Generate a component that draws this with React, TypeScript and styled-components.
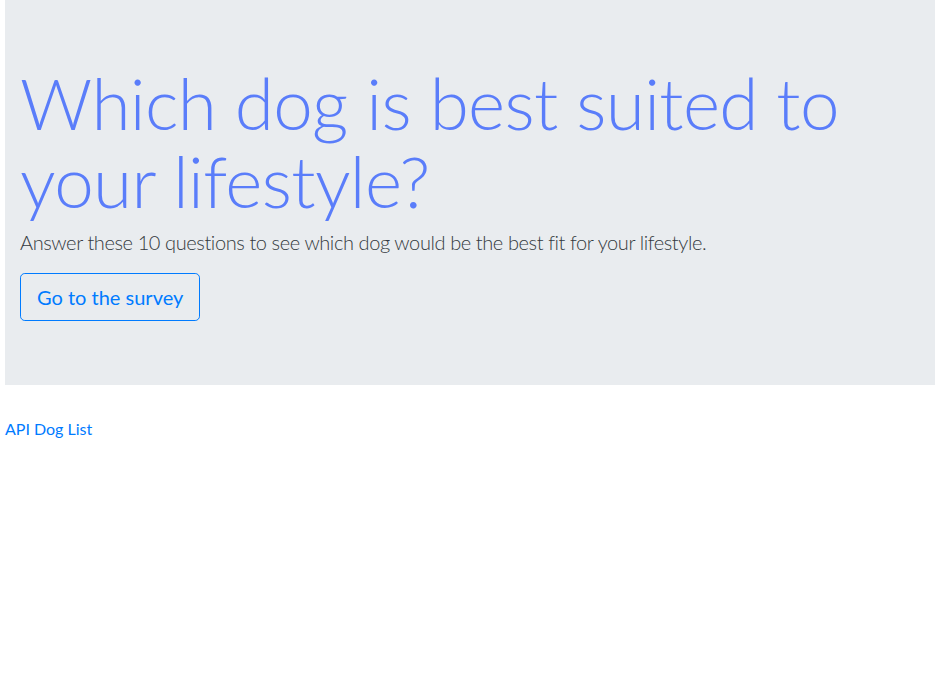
import React from 'react';
import styled, { createGlobalStyle } from 'styled-components';

const GlobalStyle = createGlobalStyle`
  html, body {
    margin: 0;
    padding: 0;
    background: #fff;
  }
  body {
    font-family: Lato, "Open Sans", "Liberation Sans", sans-serif;
    font-size: 16px;
    line-height: 1.5;
    color: #212529;
  }
`;

const Page = styled.div`
  padding: 0 4px 0 5px;
`;

const Jumbotron = styled.section`
  background-color: #e9ecef;
  padding: 64px 15px;
  margin-bottom: 32px;
`;

const Heading = styled.h1`
  margin: 0 0 7px;
  font-size: 71px;
  font-weight: 300;
  line-height: 78px;
  letter-spacing: -0.65px;
  color: #5a7dfa;
`;

const Lead = styled.p`
  margin: 0 0 16px;
  font-size: 20px;
  font-weight: 300;
  line-height: 30px;
  letter-spacing: -0.4px;
  color: #343a40;
`;

const OutlineButton = styled.a`
  display: inline-block;
  padding: 8px 16px;
  font-size: 20px;
  line-height: 30px;
  color: #007bff;
  border: 1px solid #007bff;
  border-radius: 4.8px;
  text-decoration: none;
  cursor: pointer;

  &:hover {
    color: #fff;
    background-color: #007bff;
  }
`;

const NavLink = styled.a`
  display: inline-block;
  color: #007bff;
  text-decoration: none;
  line-height: 24px;
`;

export default function App() {
  return (
    <Page>
      <GlobalStyle />
      <Jumbotron>
        <Heading>Which dog is best suited to your lifestyle?</Heading>
        <Lead>
          Answer these 10 questions to see which dog would be the best fit for your lifestyle.
        </Lead>
        <OutlineButton href="#survey">Go to the survey</OutlineButton>
      </Jumbotron>
      <NavLink href="#dogs">API Dog List</NavLink>
    </Page>
  );
}
